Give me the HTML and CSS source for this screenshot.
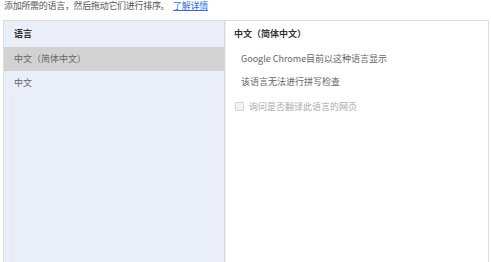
FILE: index.html
```html
<!DOCTYPE html>
<html lang="zh-CN">
<head>
<meta charset="utf-8">
<link rel="stylesheet" href="styles.css">
</head>
<body>
<div class="intro">添加所需的语言，然后拖动它们进行排序。 <a class="link" href="#">了解详情</a></div>
<div class="box">
  <div class="list">
    <div class="list-head">语言</div>
    <div class="row selected">中文（简体中文）</div>
    <div class="row">中文</div>
    <div class="filler"></div>
  </div>
  <div class="detail">
    <div class="detail-head">中文（简体中文）</div>
    <div class="line">Google Chrome目前以这种语言显示</div>
    <div class="line">该语言无法进行拼写检查</div>
    <label class="check"><span class="box-mark"></span>询问是否翻译此语言的网页</label>
  </div>
</div>
</body>
</html>
```
FILE: styles.css
```css
html, body {
  margin: 0;
  padding: 0;
  background: #ffffff;
  overflow: hidden;
}
body {
  width: 491px;
  height: 262px;
  font-family: "Noto Sans CJK SC", "Noto Sans", sans-serif;
  font-size: 9px;
  color: #555;
}
.intro {
  height: 20px;
  line-height: 12px;
  padding-left: 4px;
  color: #555;
  letter-spacing: -0.3px;
}
.link {
  color: #2f6fd6;
  text-decoration: underline;
  margin-left: 2px;
}
.box {
  margin-left: 3px;
  width: 484px;
  height: 241px;
  border: 1px solid #dedede;
  border-bottom: 0;
  display: flex;
}
.list {
  width: 220px;
  background: #eaeef9;
  border-right: 1px solid #d6d9e0;
  display: flex;
  flex-direction: column;
}
.list-head {
  height: 26px;
  line-height: 26px;
  padding-left: 10px;
  font-weight: bold;
  color: #333;
}
.row {
  height: 24px;
  line-height: 24px;
  padding-left: 10px;
  color: #666;
}
.row.selected {
  background: #d2d2d2;
}
.filler {
  flex: 1;
  margin-left: 7px;
  border-left: 1px solid #e2e6f1;
}
.detail {
  flex: 1;
  background: #fff;
  border-left: 1px solid #ececec;
  display: flex;
  flex-direction: column;
}
.detail-head {
  height: 26px;
  line-height: 26px;
  padding-left: 8px;
  font-weight: bold;
  color: #333;
}
.line {
  height: 23px;
  line-height: 23px;
  padding-left: 15px;
  color: #666;
}
.check {
  display: flex;
  align-items: center;
  height: 26px;
  padding-left: 9px;
  color: #aaa;
}
.box-mark {
  width: 7px;
  height: 7px;
  border: 1px solid #d4d4d4;
  background: #f4f4f4;
  border-radius: 1px;
  margin-right: 5px;
}
```
